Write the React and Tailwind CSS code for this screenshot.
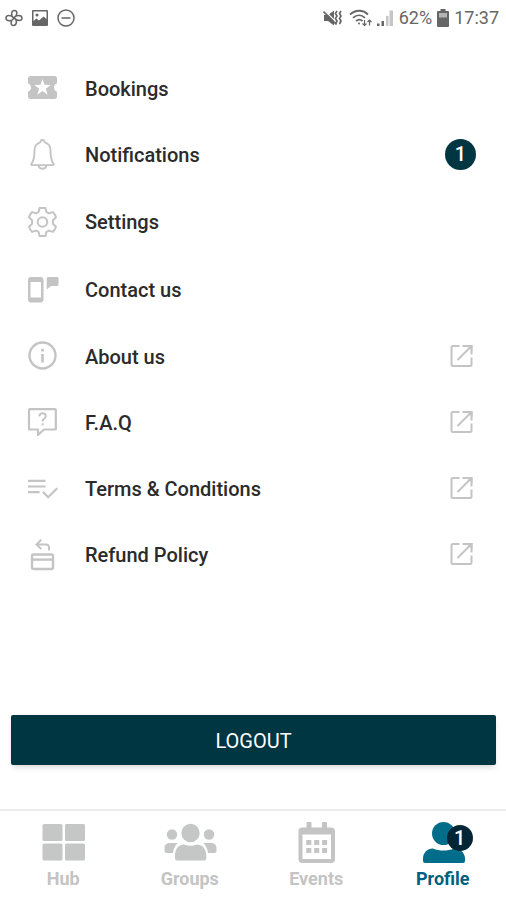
import { clsx } from 'clsx';

function TicketIcon() {
  return (
    <svg viewBox="0 0 36 36" className="size-9" fill="#c4c4c4">
      <path fillRule="evenodd" d="M6.500 6h24A2.500 2.500 0 0 1 33 8.500v5a4.300 4.300 0 0 0 0 8.200v5a2.500 2.500 0 0 1-2.500 2.300h-24A2.500 2.500 0 0 1 4 26.700v-5a4.300 4.300 0 0 0 0-8.200v-5A2.500 2.500 0 0 1 6.500 6zM18.500 9l-2 5.800-6.300.1 5 3.800-1.900 6 5.200-3.600 5.200 3.600-1.900-6 5-3.800-6.300-.1z" />
    </svg>
  );
}

function BellIcon() {
  return (
    <svg viewBox="0 0 36 36" className="size-9" fill="none" stroke="#c4c4c4" strokeWidth="1.900" strokeLinejoin="round">
      <path d="M18.500 4c-1.400 0-2.100.9-2.200 2.300-3.800 1-5.800 4.200-5.800 8.200 0 6.500-.7 10.500-3.100 13.300-.5.600-.2 1.300.6 1.300h21c.8 0 1.100-.7.6-1.300-2.400-2.800-3.100-6.800-3.100-13.300 0-4-2-7.200-5.800-8.200-.1-1.400-.8-2.300-2.200-2.300z" />
      <path d="M14.500 29.500c.6 2.200 2 3.200 4 3.200s3.400-1 4-3.200" />
    </svg>
  );
}

function GearIcon() {
  return (
    <svg viewBox="0 0 36 36" className="size-9" fill="none" stroke="#c4c4c4" strokeWidth="2" strokeLinejoin="round">
      <path d="M15.500 5h6l.8 3.900 2.600 1.500 3.900-1.300c1.500 1.400 2.600 3.300 3.200 5.200l-3.100 2.900v3.600l3.100 2.900c-.6 1.900-1.700 3.800-3.200 5.200l-3.900-1.300-2.600 1.500-.8 3.900h-6l-.8-3.900-2.600-1.500-3.900 1.300C6.700 27.500 5.600 25.600 5 23.700l3.100-2.900v-3.600L5 14.300c.6-1.900 1.700-3.800 3.200-5.200l3.900 1.300 2.600-1.500z" />
      <circle cx="18.500" cy="19" r="4.800" />
    </svg>
  );
}

function ContactIcon() {
  return (
    <svg viewBox="0 0 36 36" className="size-9" fill="#c4c4c4">
      <path fillRule="evenodd" d="M7 6h9.500a3 3 0 0 1 3 3v19.500a3 3 0 0 1-3 3H7a3 3 0 0 1-3-3V9a3 3 0 0 1 3-3zm-.5 5v15.500H17V11z" />
      <path d="M24 6h9a1.500 1.500 0 0 1 1.500 1.500v6A1.500 1.500 0 0 1 33 15h-6l-4.300 3.500v-11A1.500 1.500 0 0 1 24 6z" />
    </svg>
  );
}

function InfoIcon() {
  return (
    <svg viewBox="0 0 36 36" className="size-9" fill="none" stroke="#c4c4c4" strokeWidth="2.400">
      <circle cx="18.500" cy="17.500" r="13" />
      <path d="M18.500 16v8.500M18.500 10.800v2.700" strokeWidth="2.600" />
    </svg>
  );
}

function FaqIcon() {
  return (
    <svg viewBox="0 0 36 36" className="size-9" fill="none" stroke="#c4c4c4" strokeWidth="2.200" strokeLinejoin="round">
      <path d="M5.500 5.200h25.500a.8.8 0 0 1 .8.800v19.500H20L14 31v-5.500H5V6z" />
      <path d="M15.300 12.300c.2-2 1.500-3 3.300-3s3.200 1.100 3.200 2.900c0 2.300-3.200 2.500-3.200 5.300M18.600 19.300v2.200" strokeWidth="1.900" />
    </svg>
  );
}

function TermsIcon() {
  return (
    <svg viewBox="0 0 36 36" className="size-9" fill="none" stroke="#c4c4c4" strokeWidth="2.200">
      <path d="M4 10.900h17.500M4 16.500h17.500M4 22.200h11.500M18.800 21.800l5.400 5.400 9-9" />
    </svg>
  );
}

function RefundIcon() {
  return (
    <svg viewBox="0 0 36 36" className="size-9" fill="none" stroke="#c4c4c4" strokeWidth="2">
      <rect x="8" y="18.500" width="21" height="14.500" rx="1.800" strokeWidth="2.400" />
      <path d="M8 23.600h21" strokeWidth="2.400" />
      <path d="M17.300 3.800l-4.800 4.600 4.800 4.600M12.500 8.400h9.500a3 3 0 0 1 3 3v3" />
    </svg>
  );
}

function ExternalIcon() {
  return (
    <svg viewBox="0 0 24 24" className="size-6" fill="none" stroke="#c4c4c4" strokeWidth="2">
      <path d="M9.500 2H3a1.500 1.500 0 0 0-1.500 1.500v17A1.500 1.500 0 0 0 3 22h17a1.500 1.500 0 0 0 1.500-1.500V13.500" />
      <path d="M12.500 2h9v8.500M21.500 2L7.500 16" />
      <path d="M16 1h6.500v6.500z" fill="#c4c4c4" stroke="none" />
    </svg>
  );
}

function HubIcon() {
  return (
    <svg viewBox="0 0 56 46" className="h-[46px] w-14" fill="#c4c7c6">
      <rect x="7.500" y="5" width="20" height="17" rx="1.500" />
      <rect x="30" y="5" width="20" height="17" rx="1.500" />
      <rect x="7.500" y="24.500" width="20" height="17" rx="1.500" />
      <rect x="30" y="24.500" width="20" height="17" rx="1.500" />
    </svg>
  );
}

function GroupsIcon() {
  return (
    <svg viewBox="0 0 56 46" className="h-[46px] w-14" fill="#c4c7c6">
      <circle cx="28.500" cy="14" r="9.200" />
      <circle cx="10" cy="15.500" r="5.200" />
      <circle cx="47" cy="15.500" r="5.200" />
      <path d="M7.500 24h8.300c-2.800 2.600-4.300 6-4.800 10H4.500a2 2 0 0 1-2-2v-2.500c0-3.300 2-5.500 5-5.500zM49.500 24h-8.300c2.800 2.600 4.300 6 4.800 10h6.500a2 2 0 0 0 2-2v-2.500c0-3.300-2-5.500-5-5.500z" />
      <path d="M22 25.500c4.200 1.800 8.800 1.800 13 0 5.500.3 9 4.500 9.300 10.500v3.500a2 2 0 0 1-2 2H15a2 2 0 0 1-2-2V36c.3-6 3.500-10.200 9-10.500z" />
    </svg>
  );
}

function EventsIcon() {
  return (
    <svg viewBox="0 0 56 46" className="h-[46px] w-14" fill="#c4c4c4">
      <path fillRule="evenodd" d="M18.500 4a1 1 0 0 1 1-1h3a1 1 0 0 1 1 1v4.500H34V4a1 1 0 0 1 1-1h3a1 1 0 0 1 1 1v4.500h4a4 4 0 0 1 4 4V40a4 4 0 0 1-4 4H14.500a4 4 0 0 1-4-4V12.500a4 4 0 0 1 4-4h4zM14.500 15.500V40H43V15.500z" />
      <path d="M18.300 21h5v5h-5zM26.200 21h5v5h-5zM34.100 21h5v5h-5zM18.300 29h5v5h-5zM26.200 29h5v5h-5zM34.100 29h5v5h-5z" />
    </svg>
  );
}

function ProfileIcon() {
  return (
    <svg viewBox="0 0 56 46" className="h-[46px] w-14" fill="#006d8b">
      <circle cx="28.500" cy="14.500" r="11.500" />
      <path d="M18 29.500c6.500 2.800 14.500 2.800 21 0 6.500.3 10.500 4 11 9.500V42a2 2 0 0 1-2 2H10a2 2 0 0 1-2-2v-3c.5-5.500 4-9.200 10-9.500z" />
    </svg>
  );
}

const menu = [
  { label: 'Bookings', Icon: TicketIcon },
  { label: 'Notifications', Icon: BellIcon, badge: 1 },
  { label: 'Settings', Icon: GearIcon, tall: true },
  { label: 'Contact us', Icon: ContactIcon, tall: true },
  { label: 'About us', Icon: InfoIcon, external: true },
  { label: 'F.A.Q', Icon: FaqIcon, external: true },
  { label: 'Terms & Conditions', Icon: TermsIcon, external: true },
  { label: 'Refund Policy', Icon: RefundIcon, external: true },
];

const tabs = [
  { label: 'Hub', Icon: HubIcon },
  { label: 'Groups', Icon: GroupsIcon },
  { label: 'Events', Icon: EventsIcon },
  { label: 'Profile', Icon: ProfileIcon, active: true, badge: 1 },
];

function StatusBar() {
  return (
    <header className="flex h-9 items-center justify-between pr-[7px] pl-[5px] text-[#666]">
      <div className="flex items-center gap-2">
        <svg viewBox="0 0 18 18" className="size-[18px]" fill="none" stroke="currentColor" strokeWidth="1.500">
          <path d="M9 9C5.500 7.500 6 1.500 9.500 1.500S12.500 6.500 9 9zM9 9c1.500-3.500 8-3.500 8 0S12 12 9 9zM9 9c3.500 1.500 3 7.500-.5 7.500S5.500 11.500 9 9zM9 9c-1.500 3.500-8 3.500-8 0S6 6 9 9z" />
        </svg>
        <svg viewBox="0 0 18 18" className="size-[18px]">
          <path fill="currentColor" fillRule="evenodd" d="M2 1h14a1 1 0 0 1 1 1v14a1 1 0 0 1-1 1H2a1 1 0 0 1-1-1V2a1 1 0 0 1 1-1zm.5 1.500V12l3-2.500 2.500 2 4.500-4 3 2.500V2.500zM6 4.500a1.500 1.500 0 1 1 0 3 1.500 1.500 0 0 1 0-3z" />
        </svg>
        <svg viewBox="0 0 18 18" className="size-[18px]" fill="none" stroke="currentColor" strokeWidth="1.500">
          <circle cx="9" cy="9" r="8" />
          <path d="M4.500 9h9" />
        </svg>
      </div>
      <div className="flex items-center gap-[5px]">
        <svg viewBox="0 0 20 18" className="h-[18px] w-5">
          <path fill="currentColor" d="M1 6h4l6-4.500v15L5 12H1z" />
          <path stroke="#fff" strokeWidth="1.200" d="M1.500 1.500L14 14" />
          <path stroke="currentColor" strokeWidth="1.700" d="M.5 2.500L13.500 15.500" />
          <path fill="none" stroke="currentColor" strokeWidth="1.700" d="M14 2l-1.500 2.500L14 7l-1.500 2.500L14 12l-1.500 3M18 2l-1.500 2.500L18 7l-1.500 2.500L18 12l-1.500 3" />
        </svg>
        <svg viewBox="0 0 24 18" className="h-[18px] w-6" fill="none" stroke="currentColor" strokeWidth="1.800">
          <path d="M2 5.500c5.500-5 13-5 18 0M5 8.800c3.700-3.300 8.500-3.300 12 0M8 12c2-1.700 4.500-1.700 6.500 0" />
          <circle cx="11" cy="14.500" r="1" fill="currentColor" stroke="none" />
          <path strokeWidth="1.200" d="M16.500 11v5.500M14.500 14.500l2 2 2-2M21.500 16.500V11M19.500 13l2-2 2 2" />
        </svg>
        <svg viewBox="0 0 17 18" className="h-[18px] w-[17px]">
          <path fill="currentColor" d="M0 14.500h2.500V17H0zM4.500 12H7v5H4.500z" />
          <path fill="#c6c6c6" d="M9 7h2.500v10H9zM12.500 1.500H16V17h-3.500z" />
        </svg>
        <span className="text-lg leading-5">62%</span>
        <svg viewBox="0 0 12 18" className="h-[18px] w-3">
          <path fill="currentColor" d="M3.500 0h5v2H11a1 1 0 0 1 1 1v14a1 1 0 0 1-1 1H1a1 1 0 0 1-1-1V3a1 1 0 0 1 1-1h2.500z" />
          <path fill="#b5b5b5" d="M2 4h8v4.500H2z" />
        </svg>
        <span className="text-lg leading-5">17:37</span>
      </div>
    </header>
  );
}

export default function App() {
  return (
    <div className="flex min-h-screen flex-col bg-white font-['Roboto',sans-serif]">
      <StatusBar />

      <main className="flex grow flex-col pt-[19px]">
        <ul>
          {menu.map(({ label, Icon, badge, external, tall }) => (
            <li key={label}>
              <a href="#" className={clsx('flex items-center pr-8 pl-6', tall ? 'h-[68px]' : 'h-[66px]')}>
                <Icon />
                <span className="ml-[25px] grow pt-0.5 text-xl font-medium text-[#2b2b2b]">{label}</span>
                {badge && (
                  <span className="-mr-0.5 flex size-[31px] items-center justify-center rounded-full bg-[#003642] text-xl font-medium text-white">
                    {badge}
                  </span>
                )}
                {external && <ExternalIcon />}
              </a>
            </li>
          ))}
        </ul>

        <div className="mt-auto pr-2.5 pl-[11px] pb-11">
          <button type="button" className="h-[50px] w-full rounded-xs bg-[#003642] pt-0.5 text-xl text-white shadow-md">
            LOGOUT
          </button>
        </div>
      </main>

      <nav className="grid h-[91px] grid-cols-4 border-t-2 border-[#ececec] pt-2">
        {tabs.map(({ label, Icon, active, badge }) => (
          <a
            key={label}
            href="#"
            className={clsx('flex flex-col items-center text-lg font-bold', active ? 'text-[#006080]' : 'text-[#c4c4c4]')}
          >
            <span className="relative">
              <Icon />
              {badge && (
                <span className="absolute top-1.5 -right-0.5 flex size-[26px] items-center justify-center rounded-full bg-[#002534] text-xl font-medium text-white">
                  {badge}
                </span>
              )}
            </span>
            <span className="leading-7">{label}</span>
          </a>
        ))}
      </nav>
    </div>
  );
}
